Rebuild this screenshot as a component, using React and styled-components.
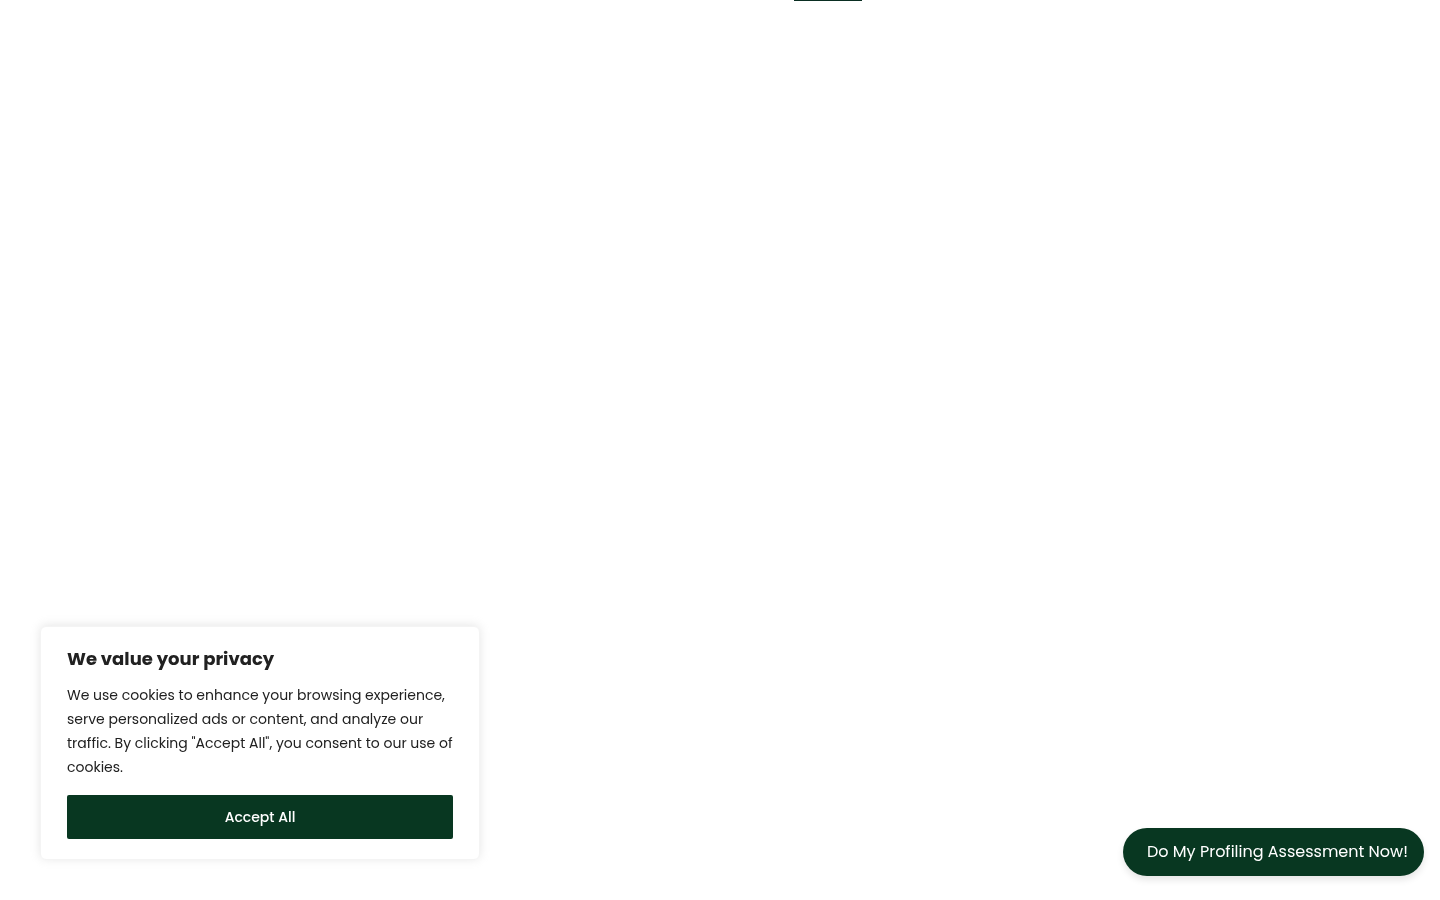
import React, { useState } from "react";
import styled, { createGlobalStyle } from "styled-components";

const GlobalStyle = createGlobalStyle`
  *, *::before, *::after { box-sizing: border-box; }
  body {
    margin: 0;
    background: #ffffff;
    color: #212121;
    font-family: Poppins, Inter, sans-serif;
  }
`;

const Page = styled.main`
  min-height: 100vh;
`;

const Header = styled.header`
  display: flex;
  justify-content: center;
  padding-left: 216px;
`;

const ActiveUnderline = styled.span`
  width: 68px;
  height: 1px;
  background: #0a2e22;
`;

const ConsentCard = styled.section`
  position: fixed;
  left: 40px;
  bottom: 40px;
  width: 440px;
  max-width: calc(100vw - 80px);
  padding: 20px 26px;
  border: 1px solid #f4f4f4;
  border-radius: 6px;
  background: #ffffff;
  box-shadow: 0 -1px 10px rgba(172, 171, 171, 0.3);
`;

const ConsentTitle = styled.h2`
  margin: 0 0 12px;
  font-size: 18px;
  line-height: 24px;
  font-weight: 700;
`;

const ConsentText = styled.p`
  margin: 0 0 16px;
  font-size: 14px;
  line-height: 24px;
`;

const AcceptButton = styled.button`
  width: 100%;
  height: 44px;
  border: 0;
  border-radius: 2px;
  background: #083721;
  color: #ffffff;
  font: inherit;
  font-size: 14px;
  font-weight: 500;
  line-height: 24px;
  cursor: pointer;
`;

const AssessmentLink = styled.a`
  position: fixed;
  right: 16px;
  bottom: 24px;
  padding: 12px 16px 12px 24px;
  border-radius: 24px;
  background: #083721;
  color: #ffffff;
  font-size: 16px;
  line-height: 24px;
  text-decoration: none;
  white-space: nowrap;
  box-shadow: 0 4px 7px rgba(0, 0, 0, 0.1);
`;

export default function App() {
  const [accepted, setAccepted] = useState(false);

  return (
    <>
      <GlobalStyle />
      <Page>
        <Header>
          <ActiveUnderline />
        </Header>
        {!accepted && (
          <ConsentCard aria-labelledby="consent-title">
            <ConsentTitle id="consent-title">We value your privacy</ConsentTitle>
            <ConsentText>
              We use cookies to enhance your browsing experience, serve
              personalized ads or content, and analyze our traffic. By clicking
              "Accept All", you consent to our use of cookies.
            </ConsentText>
            <AcceptButton type="button" onClick={() => setAccepted(true)}>
              Accept All
            </AcceptButton>
          </ConsentCard>
        )}
        <AssessmentLink href="#assessment">
          Do My Profiling Assessment Now!
        </AssessmentLink>
      </Page>
    </>
  );
}
